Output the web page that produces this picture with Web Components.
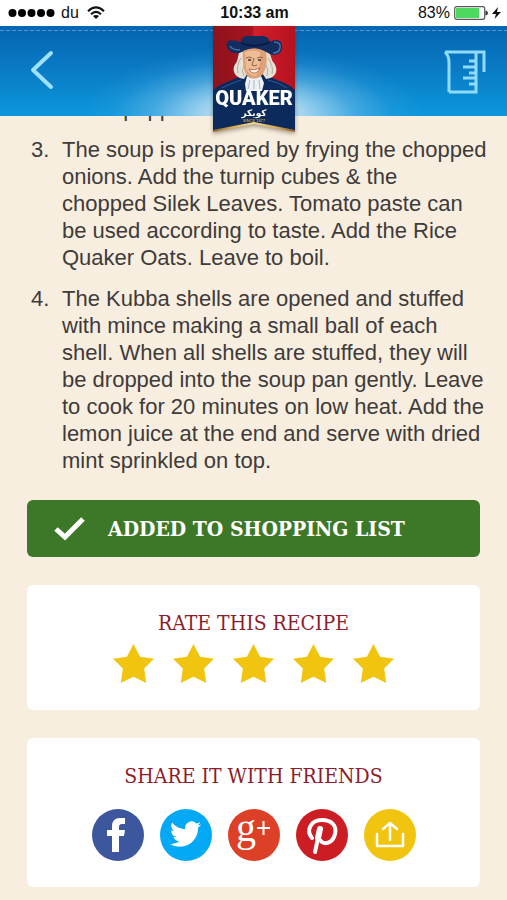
<!DOCTYPE html>
<html lang="en">
<head>
<meta charset="utf-8">
<meta name="viewport" content="width=device-width, initial-scale=1">
<title>Quaker recipe</title>
<style>
  body {
    margin: 0;
    background: #f7eedf;
    font-family: "Liberation Sans", Arial, sans-serif;
    color: #3e3b3a;
  }
</style>
</head>
<body>
<recipe-app></recipe-app>

<script>
/**
 * Attach an open shadow root filled with the given markup
 */
const render = (host, html) => {
  const template = document.createElement('template')
  template.innerHTML = html
  host.attachShadow({mode: 'open'}).append(template.content.cloneNode(true))
}

/**
 * @class StatusBar
 */
class StatusBar extends HTMLElement {
  constructor() {
    super()
    render(this, `
      <style>
      :host {
        display: grid;
        grid-template-columns: 1fr auto 1fr;
        align-items: center;
        height: 26px;
        padding: 0 6px 0 8px;
        background: #fff;
        color: #111;
        font-size: 16px;
        line-height: 26px;
      }
      div {
        display: flex;
        align-items: center;
        gap: 6px;
      }
      .right {
        justify-content: flex-end;
        gap: 4px;
      }
      svg {
        display: block;
      }
      </style>
      <div>
        <svg width="47" height="10" viewBox="0 0 47 10" aria-label="Signal">
          <circle cx="4.500" cy="5" r="4"/><circle cx="14" cy="5" r="4"/><circle cx="23.500" cy="5" r="4"/><circle cx="33" cy="5" r="4"/><circle cx="42.500" cy="5" r="4"/>
        </svg>
        <span>du</span>
        <svg width="22" height="14" viewBox="0 0 22 14" fill="none" stroke="#111" stroke-width="2" aria-label="Wi-Fi">
          <path d="M3 5.200Q11-2.400 19 5.200M6 8.200Q11 3.600 16 8.200"/>
          <path d="M8 10Q11 7.800 14 10L11 13Z" fill="#111" stroke="none"/>
        </svg>
      </div>
      <strong>10:33 am</strong>
      <div class="right">
        <span>83%</span>
        <svg width="34" height="14" viewBox="0 0 34 14" aria-label="Battery">
          <rect x="0.700" y="0.700" width="30" height="12.600" rx="2" fill="#fff" stroke="#555" stroke-width="1.200"/>
          <path d="M2 2H25V12H2Z" fill="#4cd95f"/>
          <path d="M31.500 4.500Q34 5 34 7T31.500 9.500Z" fill="#333"/>
        </svg>
        <svg width="9" height="12" viewBox="0 0 9 12" aria-label="Charging">
          <path d="M6 0L0 7H4L2.500 12L9 5H5Z" fill="#111"/>
        </svg>
      </div>
    `)
  }
}
customElements.define('status-bar', StatusBar)

/**
 * @class QuakerLogo
 */
class QuakerLogo extends HTMLElement {
  constructor() {
    super()
    render(this, `
      <style>
      :host {
        display: block;
        width: 84px;
        height: 110px;
        filter: drop-shadow(0 2px 2px rgba(60, 40, 20, .45));
      }
      svg {
        display: block;
      }
      .brand {
        font: 900 20px Roboto, "Liberation Sans", sans-serif;
      }
      .arabic {
        font: bold 9px "DejaVu Sans", sans-serif;
      }
      .since {
        font: bold 4px "Liberation Sans", sans-serif;
      }
      </style>
      <svg width="84" height="110" viewBox="0 0 84 110" role="img" aria-label="Quaker">
        <defs>
          <linearGradient id="red" x1="0" x2="1" y1="0" y2="0">
            <stop offset="0" stop-color="#8d121c"/><stop offset=".48" stop-color="#a81420"/>
            <stop offset=".5" stop-color="#d31f2c"/><stop offset="1" stop-color="#b5121f"/>
          </linearGradient>
          <linearGradient id="gold" x1="0" x2="1" y1="0" y2="0">
            <stop offset="0" stop-color="#8a6528"/><stop offset=".25" stop-color="#e0ae4c"/>
            <stop offset=".5" stop-color="#f3dc94"/><stop offset=".75" stop-color="#e0ae4c"/><stop offset="1" stop-color="#8a6528"/>
          </linearGradient>
        </defs>
        <path d="M1 0H83V106L42 98L1 106Z" fill="url(#gold)"/>
        <path d="M1 0H83V70H1Z" fill="url(#red)"/>
        <path d="M1 64Q8 58 20 54L31 49H54L65 54Q77 58 83 64V104L42 96L1 104Z" fill="#0d2a5c"/>
        <path d="M10 62Q20 57 29 54M56 54Q68 57 75 62" fill="none" stroke="#2f5b96"/>
        <!-- hair -->
        <path d="M30 22C25 27 27 33 24 37C19 43 22 52 32 53L37 45V26ZM54 22C60 27 58 33 62 37C67 44 64 52 54 53L49 45V26Z" fill="#e6e1d6"/>
        <path d="M29 32Q24 40 26 47M32 40Q29 44 32 50M56 32Q62 41 60 48M54 39Q57 44 55 50" fill="none" stroke="#b3aca0"/>
        <!-- face -->
        <path d="M31 25Q42 19 54 25Q56 38 52 46Q48 53 42 53Q36 53 33 46Q30 37 31 25Z" fill="#dfa176"/>
        <path d="M33 26Q42 23 48 26Q49 40 44 50Q36 49 34 42Z" fill="#efbd94"/>
        <path d="M34 32Q37 30 40 32M45 32Q49 30 51 32M42 32L40 39Q42 41 45 39" fill="none" stroke="#955c43"/>
        <path d="M36 34H39M46 34H49" stroke="#34303a" stroke-width="1.500"/>
        <path d="M37 43Q42 45 48 42Q45 48 41 47Q38 46 37 43Z" fill="#fff3e5" stroke="#a65748" stroke-width=".8"/>
        <!-- cravat -->
        <path d="M35 50Q42 55 49 50L52 57L50 65H34L33 58Z" fill="#eef1f3"/>
        <path d="M38 54L36 63M42 54V63M47 54L48 63" stroke="#a9b6c4" fill="none"/>
        <!-- hat -->
        <path d="M15 21C13 15 18 13 25 15L29 16C29 12 32 10 36 10H50C54 10 57 12 58 16C62 13 69 13 70 19C71 27 64 32 56 27Q42 18 30 26C23 29 17 26 15 21Z" fill="#122e60"/>
        <path d="M29 17Q42 23 58 16" fill="none" stroke="#08193f" stroke-width="1.500"/>
        <path d="M18 20Q20 24 28 24M62 16Q69 16 68 22Q67 27 61 27" fill="none" stroke="#4471a6" stroke-width="1.500"/>
        <text class="brand" x="42" y="79" text-anchor="middle" fill="#fff">QUAKER</text>
        <text class="arabic" x="42" y="90" text-anchor="middle" fill="#fff">كويكر</text>
        <text class="since" x="42" y="96" text-anchor="middle" fill="#c49a45">SINCE 1877</text>
      </svg>
    `)
  }
}
customElements.define('quaker-logo', QuakerLogo)

/**
 * @class AppHeader
 */
class AppHeader extends HTMLElement {
  constructor() {
    super()
    render(this, `
      <style>
      :host {
        display: block;
        position: relative;
        z-index: 1;
      }
      header {
        display: flex;
        align-items: center;
        justify-content: space-between;
        height: 90px;
        padding: 0 20px;
        box-sizing: border-box;
        background:
          repeating-linear-gradient(90deg, #4a9bd2 0 4px, transparent 4px 6px) 0 4px / 100% 1px no-repeat,
          radial-gradient(ellipse 170px 68px at 50% 100%, #c4e3f5 0%, rgba(176, 218, 242, .9) 30%, rgba(120, 190, 232, .5) 60%, rgba(80, 170, 225, .18) 82%, transparent 100%),
          linear-gradient(#0565b0, #0a7cc6 50%, #0b97dc);
      }
      button {
        padding: 0;
        border: 0;
        background: none;
        cursor: pointer;
      }
      svg {
        display: block;
      }
      quaker-logo {
        position: absolute;
        top: 0;
        left: 50%;
        margin-left: -42px;
      }
      </style>
      <header>
        <button aria-label="Back">
          <svg width="44" height="44" viewBox="0 0 44 44" fill="none" stroke="#9fe2ff" stroke-width="4" stroke-linecap="round" stroke-linejoin="round">
            <path d="M31 4L13 21L31 38"/>
          </svg>
        </button>
        <quaker-logo></quaker-logo>
        <button aria-label="Measurements">
          <svg width="44" height="48" viewBox="0 0 44 48" fill="none" stroke="#8fdcff" stroke-width="3">
            <path d="M2 5H41V25M6 45V15Q6 9 2 5M33 5V45H6M33 14H26M33 20H20M33 26H26M33 31H20M33 37H26"/>
          </svg>
        </button>
      </header>
    `)
  }
}
customElements.define('app-header', AppHeader)

/**
 * @class RecipeStep
 */
class RecipeStep extends HTMLElement {
  constructor() {
    super()
    render(this, `
      <style>
      :host {
        display: grid;
        grid-template-columns: 31px 1fr;
        font-size: 22px;
        line-height: 27px;
      }
      </style>
      <span></span>
      <div><slot></slot></div>
    `)
  }

  connectedCallback() {
    this.shadowRoot.querySelector('span').textContent = `${this.getAttribute('number')}.`
  }
}
customElements.define('recipe-step', RecipeStep)

/**
 * @class ListButton
 */
class ListButton extends HTMLElement {
  constructor() {
    super()
    render(this, `
      <style>
      :host {
        display: block;
      }
      button {
        display: flex;
        align-items: center;
        gap: 23px;
        width: 100%;
        height: 57px;
        padding: 0 27px;
        border: 0;
        border-radius: 6px;
        background: #3c7828;
        color: #fff;
        font: bold 21px "DejaVu Serif Condensed", "DejaVu Serif", serif;
        text-align: left;
        white-space: nowrap;
        cursor: pointer;
      }
      </style>
      <button>
        <svg width="31" height="26" viewBox="0 0 31 26" fill="none" stroke="#fff" stroke-width="5">
          <path d="M2 13L11 21L29 3"/>
        </svg>
        <slot></slot>
      </button>
    `)
  }
}
customElements.define('list-button', ListButton)

/**
 * @class RecipeCard
 */
class RecipeCard extends HTMLElement {
  constructor() {
    super()
    render(this, `
      <style>
      :host {
        display: block;
        padding: 24px 0;
        border-radius: 6px;
        background: #fff;
      }
      h2 {
        margin: 0;
        color: #8c1d2b;
        font: 21px/28px "DejaVu Serif Condensed", "DejaVu Serif", serif;
        text-align: center;
      }
      </style>
      <h2><slot name="title"></slot></h2>
      <slot></slot>
    `)
  }
}
customElements.define('recipe-card', RecipeCard)

/**
 * @class StarRating
 */
class StarRating extends HTMLElement {
  constructor() {
    super()
    const stars = [1, 2, 3, 4, 5].map((n) =>
      `<input type="radio" name="rating" value="${n}" aria-label="${n} stars"${n === 5 ? ' checked' : ''}>`
    ).join('')
    render(this, `
      <style>
      :host {
        display: flex;
        justify-content: center;
        gap: 19px;
        padding: 7px 0 3px;
      }
      input {
        width: 41px;
        height: 39px;
        margin: 0;
        appearance: none;
        background: #f0c40f;
        clip-path: polygon(50% 0, 66% 33%, 100% 38%, 76% 63%, 81% 100%, 50% 84%, 19% 100%, 24% 63%, 0 38%, 34% 33%);
        cursor: pointer;
      }
      input:checked ~ input {
        background: #ddd;
      }
      </style>
      ${stars}
    `)
  }
}
customElements.define('star-rating', StarRating)

/**
 * @class ShareLinks
 */
class ShareLinks extends HTMLElement {
  constructor() {
    super()
    render(this, `
      <style>
      :host {
        display: flex;
        justify-content: center;
        gap: 16px;
        padding: 19px 0 2px;
      }
      a, svg {
        display: block;
        overflow: visible;
      }
      text {
        font: 40px "Liberation Serif", serif;
      }
      </style>
      <a href="#facebook" aria-label="Facebook">
        <svg width="52" height="52" viewBox="0 0 52 52">
          <circle cx="26" cy="26" r="26" fill="#3c579e"/>
          <path d="M20 43V27H15V21H20V17C20 12 23 9 28 9H33V15H30C28 15 27 16 27 18V21H33L32 27H27V43Z" fill="#fff"/>
        </svg>
      </a>
      <a href="#twitter" aria-label="Twitter">
        <svg width="52" height="52" viewBox="0 0 52 52">
          <circle cx="26" cy="26" r="26" fill="#03a9f4"/>
          <path transform="translate(10 9.500) scale(1.300)" d="M23.950 4.570a10 10 0 01-2.820.770 4.960 4.960 0 002.160-2.720c-.950.550-2 .950-3.130 1.180a4.920 4.920 0 00-8.380 4.480C7.690 8.090 4.070 6.130 1.640 3.160a4.820 4.820 0 00-.670 2.480c0 1.710.870 3.210 2.190 4.100a4.900 4.900 0 01-2.230-.620v.060a4.920 4.920 0 003.950 4.830 5 5 0 01-2.210.080 4.940 4.940 0 004.600 3.420A9.870 9.870 0 010 19.540a14 14 0 007.550 2.210c9.050 0 14-7.500 14-13.980 0-.210 0-.420-.020-.630a9.940 9.940 0 002.460-2.550z" fill="#fff"/>
        </svg>
      </a>
      <a href="#google-plus" aria-label="Google+">
        <svg width="52" height="52" viewBox="0 0 52 52">
          <circle cx="26" cy="26" r="26" fill="#dc4027"/>
          <text x="8" y="32" fill="#fff">g</text>
          <path d="M29 19H42M35.500 12V26" stroke="#fff" stroke-width="2"/>
        </svg>
      </a>
      <a href="#pinterest" aria-label="Pinterest">
        <svg width="52" height="52" viewBox="0 0 52 52" fill="none" stroke="#fff" stroke-linecap="round">
          <circle cx="26" cy="26" r="26" fill="#cc1d24" stroke="none"/>
          <path d="M16 29C10 22 14 11 26 11C36 11 41 17 39 25C37 34 28 37 24 31" stroke-width="4"/>
          <path d="M24 20L19 43" stroke-width="4"/>
          <path d="M24 20L22 29" stroke-width="6"/>
        </svg>
      </a>
      <a href="#share" aria-label="More sharing options">
        <svg width="52" height="52" viewBox="0 0 52 52" fill="none" stroke="#fff" stroke-width="2.500" stroke-linecap="round" stroke-linejoin="round">
          <circle cx="26" cy="26" r="26" fill="#f0c40f" stroke="none"/>
          <path d="M13 25V37H39V25M26 31V14M19 20L26 14L33 20"/>
        </svg>
      </a>
    `)
  }
}
customElements.define('share-links', ShareLinks)

/**
 * @class RecipeApp
 */
class RecipeApp extends HTMLElement {
  constructor() {
    super()
    render(this, `
      <style>
      :host {
        display: block;
      }
      .top {
        position: sticky;
        top: 0;
        z-index: 1;
      }
      /* the list is scrolled a little way under the header */
      main {
        display: grid;
        gap: 28px;
        margin-top: -21px;
        padding: 0 27px 13px;
      }
      .steps {
        display: grid;
        gap: 14px;
        padding-left: 4px;
        margin: 0 -8px -2px 0;
      }
      </style>
      <div class="top">
        <status-bar></status-bar>
        <app-header></app-header>
      </div>
      <main>
        <div class="steps">
          <recipe-step number="2">salt &amp; pepper</recipe-step>
          <recipe-step number="3">The soup is prepared by frying the chopped onions. Add the turnip cubes &amp; the<br>chopped Silek Leaves. Tomato paste can be used according to taste. Add the Rice Quaker Oats. Leave to boil.</recipe-step>
          <recipe-step number="4">The Kubba shells are opened and stuffed with mince making a small ball of each shell. When all shells are stuffed, they will be dropped into the soup pan gently. Leave to cook for 20 minutes on low heat. Add the lemon juice at the end and serve with dried mint sprinkled on top.</recipe-step>
        </div>
        <list-button>ADDED TO SHOPPING LIST</list-button>
        <recipe-card>
          <span slot="title">RATE THIS RECIPE</span>
          <star-rating></star-rating>
        </recipe-card>
        <recipe-card>
          <span slot="title">SHARE IT WITH FRIENDS</span>
          <share-links></share-links>
        </recipe-card>
      </main>
    `)
  }
}
customElements.define('recipe-app', RecipeApp)
</script>
</body>
</html>
